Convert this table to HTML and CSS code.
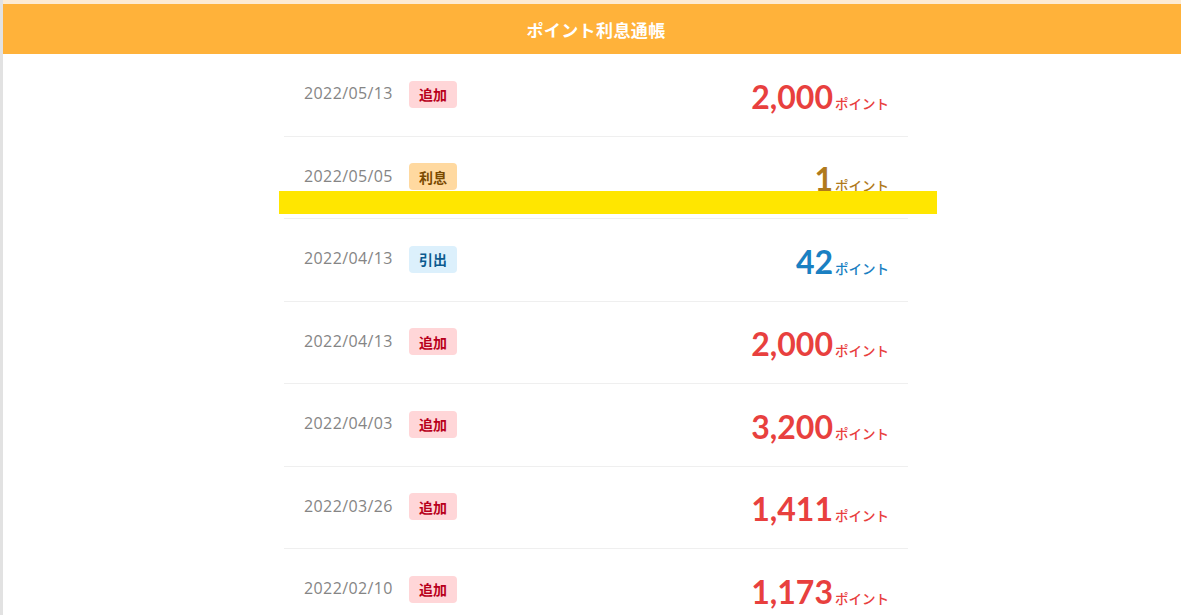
FILE: index.html
```html
<!DOCTYPE html>
<html lang="ja">
<head>
<meta charset="utf-8">
<title>ポイント利息通帳</title>
<link rel="stylesheet" href="styles.css">
</head>
<body>
<div class="page">
  <div class="side-strip"></div>
  <main class="main">
    <div class="top-strip"></div>
    <header class="header"><h1 class="title">ポイント利息通帳</h1></header>
    <div class="list-wrap">
      <ul class="list">
        <li class="row"><span class="date">2022/05/13</span><span class="badge badge-add">追加</span><span class="amount amount-add"><span class="num">2,000</span><span class="unit">ポイント</span></span></li>
        <li class="row"><span class="date">2022/05/05</span><span class="badge badge-int">利息</span><span class="amount amount-int"><span class="num">1</span><span class="unit">ポイント</span></span></li>
        <li class="row"><span class="date">2022/04/13</span><span class="badge badge-out">引出</span><span class="amount amount-out"><span class="num">42</span><span class="unit">ポイント</span></span></li>
        <li class="row"><span class="date">2022/04/13</span><span class="badge badge-add">追加</span><span class="amount amount-add"><span class="num">2,000</span><span class="unit">ポイント</span></span></li>
        <li class="row"><span class="date">2022/04/03</span><span class="badge badge-add">追加</span><span class="amount amount-add"><span class="num">3,200</span><span class="unit">ポイント</span></span></li>
        <li class="row"><span class="date">2022/03/26</span><span class="badge badge-add">追加</span><span class="amount amount-add"><span class="num">1,411</span><span class="unit">ポイント</span></span></li>
        <li class="row"><span class="date">2022/02/10</span><span class="badge badge-add">追加</span><span class="amount amount-add"><span class="num">1,173</span><span class="unit">ポイント</span></span></li>
      </ul>
      <div class="highlight"></div>
    </div>
  </main>
</div>
</body>
</html>
```
FILE: styles.css
```css
* { box-sizing: border-box; }
html, body {
  margin: 0;
  padding: 0;
  background: #fff;
}
body {
  font-family: "Noto Sans", "Noto Sans CJK JP", sans-serif;
  overflow: hidden;
}
.page {
  display: flex;
  min-height: 615px;
}
.side-strip {
  width: 3px;
  flex: 0 0 3px;
  background: #e2e2e2;
}
.main {
  flex: 1;
  min-width: 0;
}
.top-strip {
  height: 4px;
  background: #fdebd3;
}
.header {
  height: 50px;
  background: #ffb23a;
  display: flex;
  align-items: center;
  justify-content: center;
  padding-left: 8px;
}
.title {
  margin: 0;
  color: #fff;
  font-family: "Noto Sans CJK JP", sans-serif;
  font-weight: 700;
  font-size: 17px;
  letter-spacing: 0.4px;
}
.list-wrap {
  position: relative;
  width: 624px;
  margin: 0 auto;
  left: 4px;
}
.list {
  list-style: none;
  margin: 0;
  padding: 0;
}
.row {
  display: flex;
  align-items: center;
  height: 82.5px;
  padding: 0 20px;
  border-bottom: 1px solid #efefef;
}
.date {
  font-family: "Open Sans", "Noto Sans", sans-serif;
  font-size: 16px;
  letter-spacing: 0.4px;
  color: #858585;
  width: 88px;
  margin-right: 17px;
  margin-top: -3px;
  white-space: nowrap;
}
.badge {
  display: inline-flex;
  align-items: center;
  justify-content: center;
  width: 48px;
  height: 27px;
  border-radius: 4px;
  font-family: "Noto Sans CJK JP", sans-serif;
  font-weight: 700;
  font-size: 14px;
  margin-top: -1px;
}
.badge-add { background: #ffd6d8; color: #b8001c; }
.badge-int { background: #ffd9a0; color: #7a4a00; }
.badge-out { background: #dcf0fc; color: #0b5a8e; }
.amount {
  margin-left: auto;
  display: flex;
  align-items: baseline;
  padding-top: 4px;
}
.num {
  font-family: "Lato", sans-serif;
  font-weight: 700;
  font-size: 32px;
  line-height: 1;
}
.unit {
  font-family: "Noto Sans CJK JP", sans-serif;
  font-size: 13.5px;
  font-weight: 500;
  margin-left: 2px;
  margin-right: -1px;
}
.amount-add { color: #e8403e; }
.amount-int { color: #b07a1c; }
.amount-out { color: #1a80c2; }
.highlight {
  position: absolute;
  left: -5px;
  top: 137px;
  width: 658px;
  height: 23px;
  background: #ffe600;
}
```
